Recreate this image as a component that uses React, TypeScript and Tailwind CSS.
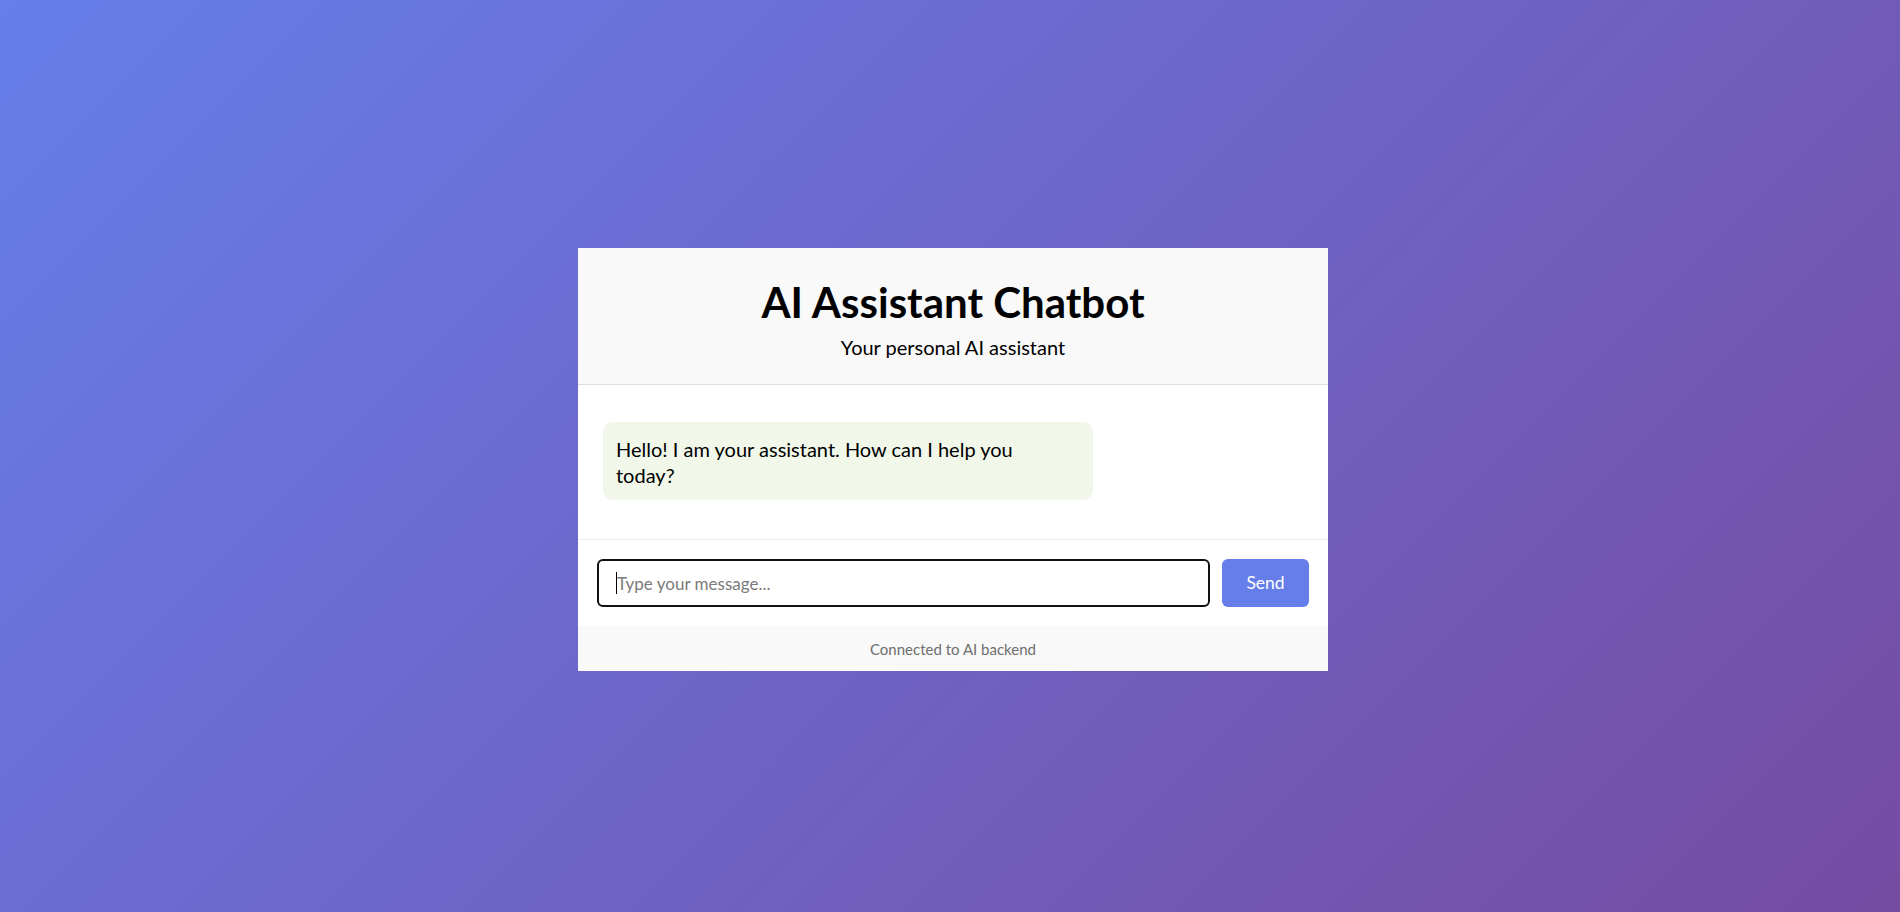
import React from "react";

export default function App() {
  return (
    <div className="min-h-screen w-full flex items-center justify-center pt-[7px] pl-[6px] bg-[linear-gradient(135deg,#667eea_0%,#764ba2_100%)] font-['Lato','Noto_Sans',sans-serif]">
      <div className="w-[750px] bg-white flex flex-col">
        <div className="bg-[#f9f9f9] border-b border-[#dddddd] h-[137px] flex flex-col items-center pt-[28px]">
          <h1 className="text-[42px] leading-[52px] font-bold text-black">AI Assistant Chatbot</h1>
          <p className="text-[20px] leading-[26px] text-black mt-[6px]">Your personal AI assistant</p>
        </div>
        <div className="h-[155px] border-b border-[#eeeeee] px-[25px] pt-[37px]">
          <div className="w-[490px] bg-[#f1f8e9] rounded-[10px] px-[13px] pt-[14px] pb-[12px] text-[20px] leading-[26px] text-black">
            Hello! I am your assistant. How can I help you
            <br />
            today?
          </div>
        </div>
        <div className="flex items-center gap-[12px] px-[19px] py-[19px]">
          <div className="relative flex-1">
            <input
              className="w-full h-[48px] border-2 border-[#111111] rounded-[6px] pl-[18px] pr-3 text-[17px] text-black placeholder:text-[#7a7a7a] outline-none bg-white"
              placeholder="Type your message..."
              readOnly
            />
            <span className="absolute left-[19px] top-[13px] w-px h-[22px] bg-black" />
          </div>
          <button className="w-[87px] h-[48px] rounded-[6px] bg-[#667eea] text-white text-[17.5px] pt-[1px]">Send</button>
        </div>
        <div className="bg-[#f9f9f9] h-[45px] flex items-center justify-center pt-[2px] text-[15px] text-[#6e6e6e]">
          Connected to AI backend
        </div>
      </div>
    </div>
  );
}
